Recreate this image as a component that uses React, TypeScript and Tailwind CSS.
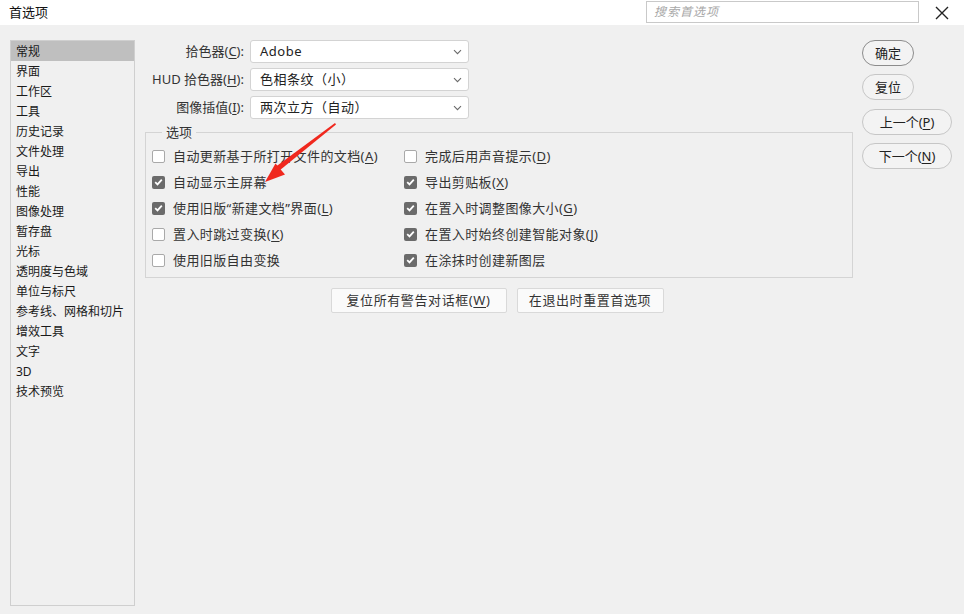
import React from "react";

const font = "font-['Noto_Sans','Noto_Sans_CJK_SC',sans-serif]";

const navItems = [
  "常规", "界面", "工作区", "工具", "历史记录", "文件处理", "导出", "性能", "图像处理",
  "暂存盘", "光标", "透明度与色域", "单位与标尺", "参考线、网格和切片", "增效工具", "文字", "3D", "技术预览",
];

function Chevron() {
  return (
    <svg width="9" height="6" viewBox="0 0 9 6" className="shrink-0">
      <path d="M1 1.2 L4.5 4.7 L8 1.2" fill="none" stroke="#6a6a6a" strokeWidth="1.1" />
    </svg>
  );
}

function Mn({ pre, k, post = "" }: { pre: string; k: string; post?: string }) {
  return (
    <span>
      {pre}(<u className="underline-offset-2">{k}</u>){post}
    </span>
  );
}

function SelectRow({ label, value }: { label: React.ReactNode; value: string }) {
  return (
    <div className="flex items-center h-[23px]">
      <div className="w-[99px] text-right text-[13px] text-[#333] leading-[23px] whitespace-nowrap">{label}</div>
      <div className="ml-[6px] w-[219px] h-[23px] bg-white border border-[#d3d3d3] rounded-[3px] flex items-center justify-between pl-[9px] pr-[6px] text-[13px] text-[#222]">
        <span className="tracking-[0.5px]">{value}</span>
        <Chevron />
      </div>
    </div>
  );
}

function Check({ checked, children }: { checked: boolean; children: React.ReactNode }) {
  return (
    <div className="flex items-center h-[26px]">
      {checked ? (
        <div className="w-[13px] h-[13px] rounded-[2px] bg-[#6b6b6b] flex items-center justify-center">
          <svg width="9" height="8" viewBox="0 0 9 8">
            <path d="M1.2 4.2 L3.5 6.4 L7.8 1.6" fill="none" stroke="white" strokeWidth="1.8" />
          </svg>
        </div>
      ) : (
        <div className="w-[13px] h-[13px] rounded-[2px] bg-white border border-[#a9a9a9]" />
      )}
      <div className="ml-[8px] text-[13px] text-[#333] tracking-[0.4px] whitespace-nowrap leading-[18px]">{children}</div>
    </div>
  );
}

export default function App() {
  return (
    <div className={`relative w-[964px] h-[614px] bg-[#f0f0f0] overflow-hidden ${font}`}>
      {/* title bar */}
      <div className="h-[25px] bg-white flex items-center">
        <div className="ml-[9px] text-[13px] text-[#111] leading-[25px]">首选项</div>
        <div className="ml-auto w-[273px] h-[22px] border border-[#c9c9c9] bg-white flex items-center pl-[7px] mb-[1px]">
          <span className="text-[12px] italic text-[#a8a8a8] tracking-[1px]">搜索首选项</span>
        </div>
        <div className="w-[45px] flex items-center justify-center">
          <svg width="14" height="14" viewBox="0 0 14 14">
            <path d="M1 1 L13 13 M13 1 L1 13" stroke="#222" strokeWidth="1.4" />
          </svg>
        </div>
      </div>

      {/* body */}
      <div className="flex pt-[15px]">
        {/* nav list */}
        <div className="ml-[10px] w-[125px] h-[566px] border border-[#cfcfcf]">
          {navItems.map((t, i) => (
            <div
              key={t}
              className={`h-[20px] pl-[5px] text-[12px] leading-[22px] text-[#1a1a1a] ${i === 0 ? "bg-[#bfbfbf]" : ""}`}
            >
              {t}
            </div>
          ))}
        </div>

        {/* main */}
        <div className="ml-[10px] w-[708px]">
          <div className="flex flex-col gap-[5px]">
            <SelectRow label={<Mn pre="拾色器" k="C" post=":" />} value="Adobe" />
            <SelectRow label={<Mn pre="HUD 拾色器" k="H" post=":" />} value="色相条纹（小）" />
            <SelectRow label={<Mn pre="图像插值" k="I" post=":" />} value="两次立方（自动）" />
          </div>

          <fieldset className="mt-[4px] border border-[#d4d4d4] pl-[6px] pr-[6px] pb-[4px]">
            <legend className="ml-[10px] px-[4px] text-[13px] leading-[18px] text-[#333]">选项</legend>
            <div className="grid grid-cols-[252px_1fr] pt-[2px]">
              <div>
                <Check checked={false}><Mn pre="自动更新基于所打开文件的文档" k="A" /></Check>
                <Check checked={true}>自动显示主屏幕</Check>
                <Check checked={true}><Mn pre="使用旧版“新建文档”界面" k="L" /></Check>
                <Check checked={false}><Mn pre="置入时跳过变换" k="K" /></Check>
                <Check checked={false}>使用旧版自由变换</Check>
              </div>
              <div>
                <Check checked={false}><Mn pre="完成后用声音提示" k="D" /></Check>
                <Check checked={true}><Mn pre="导出剪贴板" k="X" /></Check>
                <Check checked={true}><Mn pre="在置入时调整图像大小" k="G" /></Check>
                <Check checked={true}><Mn pre="在置入时始终创建智能对象" k="J" /></Check>
                <Check checked={true}>在涂抹时创建新图层</Check>
              </div>
            </div>
          </fieldset>

          <div className="mt-[10px] flex justify-center gap-[10px] pr-[4px]">
            <button className="w-[176px] h-[25px] border border-[#d9d9d9] bg-[#fafafa] rounded-[2px] text-[13px] text-[#333] tracking-[0.6px]">
              <Mn pre="复位所有警告对话框" k="W" />
            </button>
            <button className="w-[147px] h-[25px] border border-[#d9d9d9] bg-[#fafafa] rounded-[2px] text-[13px] text-[#333] tracking-[0.6px]">
              在退出时重置首选项
            </button>
          </div>
        </div>

        {/* right buttons */}
        <div className="ml-[9px] flex flex-col items-start">
          <button className="w-[52px] h-[26px] rounded-full border border-[#8c8c8c] bg-[#f3f3f3] text-[13px] text-[#222] leading-none">确定</button>
          <button className="mt-[8px] w-[52px] h-[26px] rounded-full border border-[#c6c6c6] bg-[#f3f3f3] text-[13px] text-[#222] leading-none">复位</button>
          <button className="mt-[9px] w-[90px] h-[26px] rounded-full border border-[#c6c6c6] bg-[#f3f3f3] text-[13px] text-[#222] leading-none">
            <Mn pre="上一个" k="P" />
          </button>
          <button className="mt-[8px] w-[90px] h-[26px] rounded-full border border-[#c6c6c6] bg-[#f3f3f3] text-[13px] text-[#222] leading-none">
            <Mn pre="下一个" k="N" />
          </button>
        </div>
      </div>

      {/* red annotation arrow */}
      <svg className="absolute left-0 top-0 pointer-events-none" width="964" height="614" viewBox="0 0 964 614">
        <polygon points="335,123 336,124.5 279.5,170.5 276,166.5" fill="#f0281e" />
        <polygon points="265,182 275.5,163.5 285,174.5" fill="#f0281e" />
      </svg>
    </div>
  );
}
